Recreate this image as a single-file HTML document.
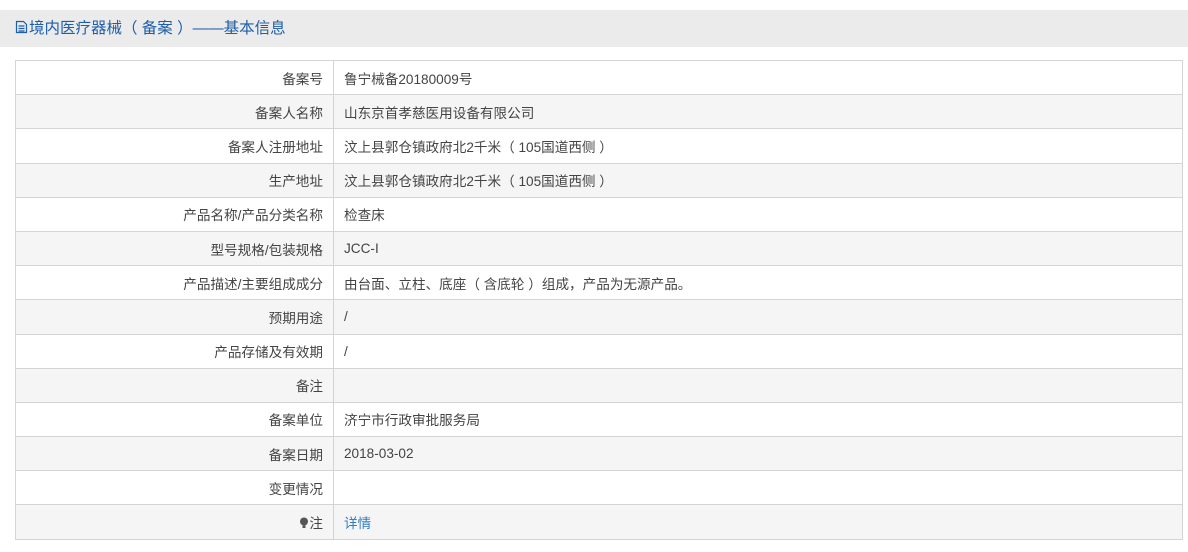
<!DOCTYPE html>
<html><head><meta charset="utf-8"><style>
body{margin:0;background:#fff;font-family:"Liberation Sans","Noto Sans CJK SC",sans-serif;font-size:13.6px;color:#444;width:1188px;height:552px;overflow:hidden}
.hd{position:absolute;left:0;top:10px;width:1188px;height:37px;background:#ebebeb;color:#1f5ea8;font-size:15.5px;line-height:38px;padding-left:15px;box-sizing:border-box}
table{position:absolute;left:15px;top:60px;width:1168px;border-collapse:collapse}
td{border:1px solid #d4d4d4;height:34.2px;padding:0 10px;box-sizing:border-box}
td.l{width:318px;text-align:right}
tr:nth-child(even) td{background:#f5f5f5}
a{color:#2f7ec4;text-decoration:none}
</style></head><body>
<div class="hd"><svg width="13" height="14" viewBox="0 0 13 14" style="vertical-align:-1px;margin-right:1px"><path d="M1.5 1.5h7l3 3v8h-10z M3.5 6h6 M3.5 8.5h6 M3.5 11h6" fill="none" stroke="#1f5ea8" stroke-width="1.2"/></svg>境内医疗器械（ 备案 ）——基本信息</div>
<table>
<tr><td class="l">备案号</td><td>鲁宁械备20180009号</td></tr>
<tr><td class="l">备案人名称</td><td>山东京首孝慈医用设备有限公司</td></tr>
<tr><td class="l">备案人注册地址</td><td>汶上县郭仓镇政府北2千米（ 105国道西侧 ）</td></tr>
<tr><td class="l">生产地址</td><td>汶上县郭仓镇政府北2千米（ 105国道西侧 ）</td></tr>
<tr><td class="l">产品名称/产品分类名称</td><td>检查床</td></tr>
<tr><td class="l">型号规格/包装规格</td><td>JCC-I</td></tr>
<tr><td class="l">产品描述/主要组成成分</td><td>由台面、立柱、底座（ 含底轮 ）组成，产品为无源产品。</td></tr>
<tr><td class="l">预期用途</td><td>/</td></tr>
<tr><td class="l">产品存储及有效期</td><td>/</td></tr>
<tr><td class="l">备注</td><td></td></tr>
<tr><td class="l">备案单位</td><td>济宁市行政审批服务局</td></tr>
<tr><td class="l">备案日期</td><td>2018-03-02</td></tr>
<tr><td class="l">变更情况</td><td></td></tr>
<tr><td class="l"><svg width="10" height="12" viewBox="0 0 10 12" style="vertical-align:-1px"><circle cx="5" cy="4.5" r="4" fill="#555"/><rect x="3.5" y="8.5" width="3" height="2.5" fill="#555"/></svg>注</td><td><a>详情</a></td></tr>
</table>
</body></html>
